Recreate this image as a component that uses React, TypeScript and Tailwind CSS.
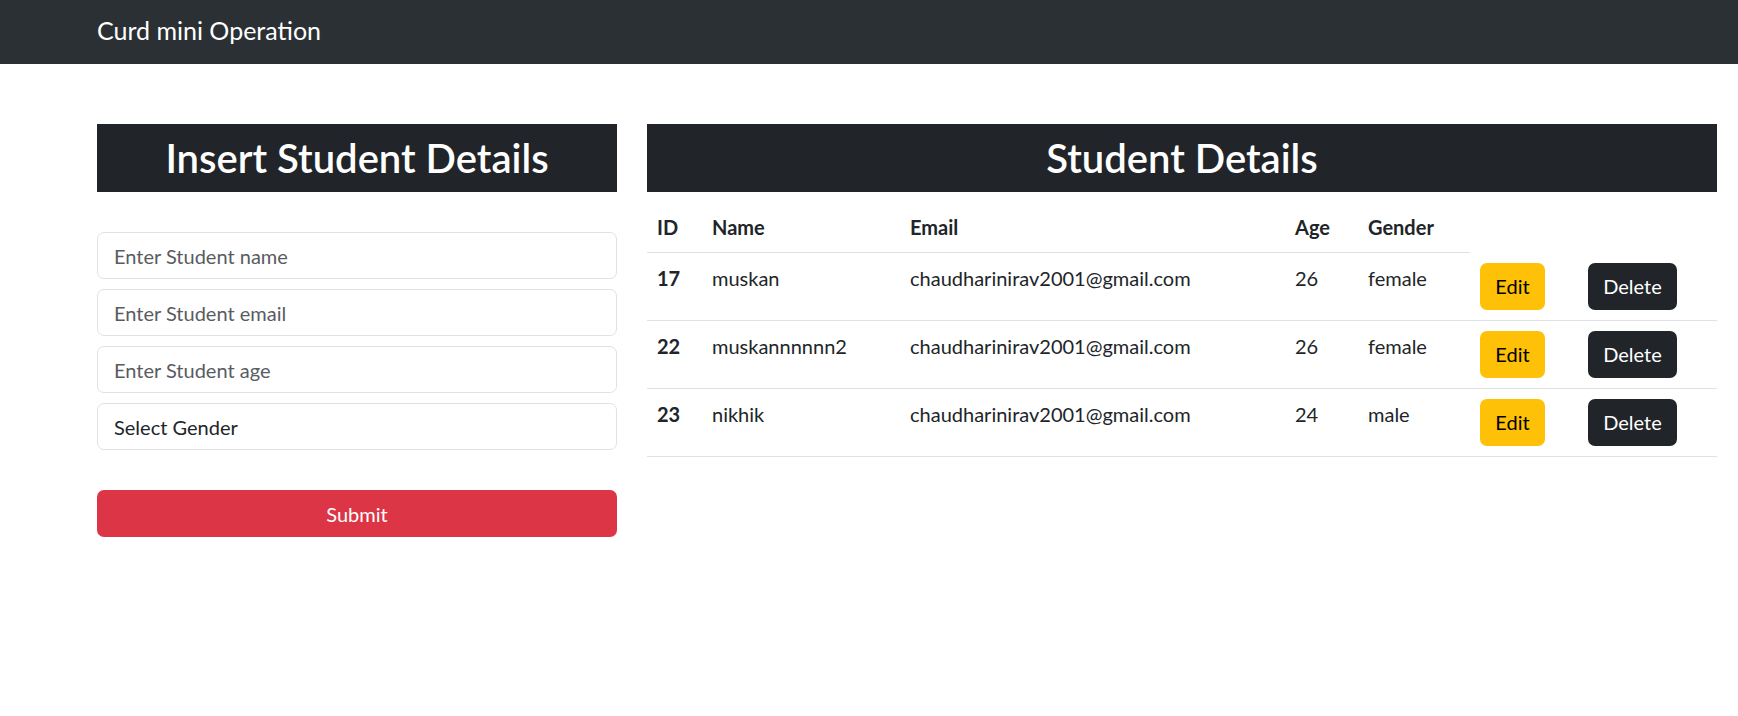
import { useState } from 'react';

interface Student {
  id: number;
  name: string;
  email: string;
  age: number;
  gender: string;
}

const students: Student[] = [
  { id: 17, name: 'muskan', email: 'chaudharinirav2001@gmail.com', age: 26, gender: 'female' },
  { id: 22, name: 'muskannnnnn2', email: 'chaudharinirav2001@gmail.com', age: 26, gender: 'female' },
  { id: 23, name: 'nikhik', email: 'chaudharinirav2001@gmail.com', age: 24, gender: 'male' },
];

export default function App() {
  const [form, setForm] = useState({ name: '', email: '', age: '', gender: '' });

  const inputClass =
    'block w-full h-[47px] rounded-[7px] border border-[#dee2e6] bg-white px-[16px] text-[20px] text-[#212529] placeholder:text-[#595c5f] outline-none';

  return (
    <div className="min-h-screen bg-white text-[#212529] font-['Lato','Noto_Sans',sans-serif]">
      {/* navbar */}
      <nav className="flex h-[64px] items-center bg-[#2b3035] pb-[4px] pl-[97px]">
        <span className="text-[25px] leading-none text-white">Curd mini Operation</span>
      </nav>

      <div className="flex gap-[30px] pl-[97px] pr-[21px] pt-[60px]">
        {/* left: form */}
        <div className="w-[520px] shrink-0">
          <h2 className="flex h-[68px] items-center justify-center bg-[#212529] text-[40px] font-semibold text-white">
            Insert Student Details
          </h2>
          <form
            className="mt-[40px] flex flex-col gap-[10px]"
            onSubmit={(e) => e.preventDefault()}
          >
            <input
              className={inputClass}
              placeholder="Enter Student name"
              value={form.name}
              onChange={(e) => setForm({ ...form, name: e.target.value })}
            />
            <input
              className={inputClass}
              placeholder="Enter Student email"
              value={form.email}
              onChange={(e) => setForm({ ...form, email: e.target.value })}
            />
            <input
              className={inputClass}
              placeholder="Enter Student age"
              value={form.age}
              onChange={(e) => setForm({ ...form, age: e.target.value })}
            />
            <select
              className={`${inputClass} appearance-none`}
              value={form.gender}
              onChange={(e) => setForm({ ...form, gender: e.target.value })}
            >
              <option value="">Select Gender</option>
              <option value="male">male</option>
              <option value="female">female</option>
            </select>
            <button
              type="submit"
              className="mt-[30px] h-[47px] w-full rounded-[7px] bg-[#dc3545] text-[20px] text-white"
            >
              Submit
            </button>
          </form>
        </div>

        {/* right: table */}
        <div className="flex-1">
          <h2 className="mb-[10px] flex h-[68px] items-center justify-center bg-[#212529] text-[40px] font-semibold text-white">
            Student Details
          </h2>
          <table className="w-full table-fixed border-collapse text-left text-[20px] leading-[30px]">
            <colgroup>
              <col className="w-[55px]" />
              <col className="w-[198px]" />
              <col className="w-[385px]" />
              <col className="w-[73px]" />
              <col className="w-[112px]" />
              <col className="w-[108px]" />
              <col />
            </colgroup>
            <thead>
              <tr>
                <th className="border-b border-[#dee2e6] p-[10px] font-bold">ID</th>
                <th className="border-b border-[#dee2e6] p-[10px] font-bold">Name</th>
                <th className="border-b border-[#dee2e6] p-[10px] font-bold">Email</th>
                <th className="border-b border-[#dee2e6] p-[10px] font-bold">Age</th>
                <th className="border-b border-[#dee2e6] p-[10px] font-bold">Gender</th>
              </tr>
            </thead>
            <tbody>
              {students.map((s) => (
                <tr key={s.id} className="border-b border-[#dee2e6] align-top">
                  <th className="p-[10px] font-bold">{s.id}</th>
                  <td className="p-[10px]">{s.name}</td>
                  <td className="p-[10px]">{s.email}</td>
                  <td className="p-[10px]">{s.age}</td>
                  <td className="p-[10px]">{s.gender}</td>
                  <td className="p-[10px]">
                    <button className="h-[47px] w-[65px] rounded-[7px] bg-[#ffc107] text-[20px] text-black">
                      Edit
                    </button>
                  </td>
                  <td className="p-[10px]">
                    <button className="h-[47px] w-[89px] rounded-[7px] bg-[#212529] text-[20px] text-white">
                      Delete
                    </button>
                  </td>
                </tr>
              ))}
            </tbody>
          </table>
        </div>
      </div>
    </div>
  );
}
